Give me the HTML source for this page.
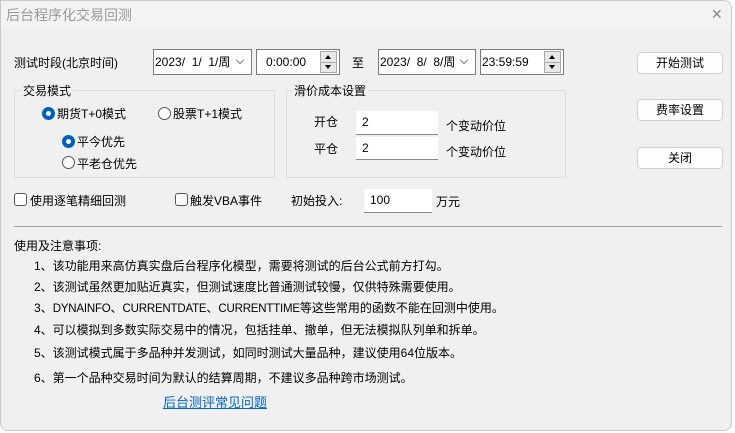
<!DOCTYPE html>
<html><head><meta charset="utf-8"><style>
*{margin:0;padding:0;box-sizing:border-box}
body{width:735px;height:433px;background:#fff;position:relative;overflow:hidden;font-family:"Liberation Sans","Noto Sans CJK SC",sans-serif;font-size:12px;color:#000}
#win{position:absolute;left:0;top:0;width:732px;height:431px;background:#f0f0f0;border:1px solid #c8c8c8;border-radius:0 8px 8px 8px;overflow:hidden}
#title{position:absolute;left:0;top:0;width:100%;height:28px;background:#f3f3f3}
.a{position:absolute;white-space:nowrap;line-height:16px}
.box{position:absolute;background:#fff;border:1px solid #7a7a7a;overflow:hidden}
.inp{position:absolute;background:#fff;border-bottom:1px solid #8a8a8a;padding-left:6px;line-height:23px}
.btn{position:absolute;width:86px;height:22px;background:#fdfdfd;border:1px solid #d0d0d0;border-radius:4px;text-align:center;line-height:20px}
.grp{position:absolute;border:1px solid #dcdcdc}
.lbl{position:absolute;background:#f0f0f0;padding:0 2px;line-height:16px}
.rad{position:absolute;width:13px;height:13px;border-radius:50%;border:1px solid #555;background:#fff}
.rad.on{border:4px solid #0060c0}
.chk{position:absolute;width:13px;height:13px;border:1px solid #555;border-radius:3px;background:#fff}
.spin{position:absolute;width:17px;height:22px;border:1px solid #aaa;background:#e8e8e8}
.spin:before{content:"";position:absolute;left:4px;top:3px;border:3px solid transparent;border-bottom:4px solid #000;border-top:0}
.spin:after{content:"";position:absolute;left:4px;top:13px;border:3px solid transparent;border-top:4px solid #000;border-bottom:0}
.spin i{position:absolute;left:0;top:10px;width:15px;height:1px;background:#aaa}
.cv{position:absolute;width:6px;height:6px;border-right:1px solid #888;border-bottom:1px solid #888;transform:rotate(45deg)}
.n{font-size:11.5px;letter-spacing:-0.2px}
</style></head><body>
<div id="win">
<div id="title"></div>
<div class="a" style="left:5px;top:6px;font-size:14px;color:#999">后台程序化交易回测</div>
<div class="a" style="left:710px;top:5px;font-size:14px;color:#888">✕</div>

<div class="a" style="left:13px;top:54px">测试时段(北京时间)</div>
<div class="box" style="left:152px;top:48px;width:99px;height:26px"><span class="a" style="left:1px;top:4px;width:78px;overflow:hidden">2023/&nbsp; 1/&nbsp; 1/周</span><div class="cv" style="left:83px;top:7px"></div></div>
<div class="box" style="left:255px;top:48px;width:84px;height:26px;overflow:visible"><span class="a" style="left:9px;top:4px">0:00:00</span><div class="spin" style="left:63px;top:1px"><i></i></div></div>
<div class="a" style="left:351px;top:54px">至</div>
<div class="box" style="left:377px;top:48px;width:98px;height:26px"><span class="a" style="left:1px;top:4px;width:78px;overflow:hidden">2023/&nbsp; 8/&nbsp; 8/周</span><div class="cv" style="left:82px;top:7px"></div></div>
<div class="box" style="left:479px;top:48px;width:84px;height:26px;overflow:visible"><span class="a" style="left:1px;top:4px">23:59:59</span><div class="spin" style="left:63px;top:1px"><i></i></div></div>

<div class="btn" style="left:636px;top:51px">开始测试</div>
<div class="btn" style="left:636px;top:98px">费率设置</div>
<div class="btn" style="left:636px;top:146px">关闭</div>

<div class="grp" style="left:13px;top:89px;width:261px;height:88px"></div>
<div class="lbl" style="left:20px;top:82px">交易模式</div>
<div class="rad on" style="left:41px;top:106px"></div><div class="a" style="left:56px;top:105px">期货T+0模式</div>
<div class="rad" style="left:157px;top:106px"></div><div class="a" style="left:172px;top:105px">股票T+1模式</div>
<div class="rad on" style="left:61px;top:134px"></div><div class="a" style="left:76px;top:133px">平今优先</div>
<div class="rad" style="left:61px;top:155px"></div><div class="a" style="left:76px;top:155px">平老仓优先</div>

<div class="grp" style="left:285px;top:89px;width:280px;height:88px"></div>
<div class="lbl" style="left:291px;top:82px">滑价成本设置</div>
<div class="a" style="left:313px;top:113px">开仓</div>
<div class="inp" style="left:355px;top:110px;width:82px;height:24px">2</div>
<div class="a" style="left:445px;top:117px">个变动价位</div>
<div class="a" style="left:313px;top:140px">平仓</div>
<div class="inp" style="left:355px;top:136px;width:82px;height:23px">2</div>
<div class="a" style="left:445px;top:143px">个变动价位</div>

<div class="chk" style="left:13px;top:192px"></div><div class="a" style="left:29px;top:192px">使用逐笔精细回测</div>
<div class="chk" style="left:174px;top:192px"></div><div class="a" style="left:189px;top:192px">触发VBA事件</div>
<div class="a" style="left:290px;top:192px">初始投入:</div>
<div class="inp" style="left:363px;top:188px;width:68px;height:24px;line-height:22px">100</div>
<div class="a" style="left:435px;top:193px">万元</div>

<div style="position:absolute;left:13px;top:225px;width:708px;height:1px;background:#a0a0a0"></div>
<div class="a" style="left:13px;top:237px">使用及注意事项:</div>
<div class="a" style="left:33px;top:257px">1、该功能用来高仿真实盘后台程序化模型，需要将测试的后台公式前方打勾。</div>
<div class="a" style="left:33px;top:278px">2、该测试虽然更加贴近真实，但测试速度比普通测试较慢，仅供特殊需要使用。</div>
<div class="a" style="left:33px;top:299px">3、<span class="n">DYNAINFO</span>、<span class="n">CURRENTDATE</span>、<span class="n">CURRENTTIME</span>等这些常用的函数不能在回测中使用。</div>
<div class="a" style="left:33px;top:321px">4、可以模拟到多数实际交易中的情况，包括挂单、撤单，但无法模拟队列单和拆单。</div>
<div class="a" style="left:33px;top:344px">5、该测试模式属于多品种并发测试，如同时测试大量品种，建议使用64位版本。</div>
<div class="a" style="left:33px;top:369px">6、第一个品种交易时间为默认的结算周期，不建议多品种跨市场测试。</div>
<div class="a" style="left:162px;top:394px;color:#0066cc;text-decoration:underline;font-size:13px">后台测评常见问题</div>
</div>
</body></html>
